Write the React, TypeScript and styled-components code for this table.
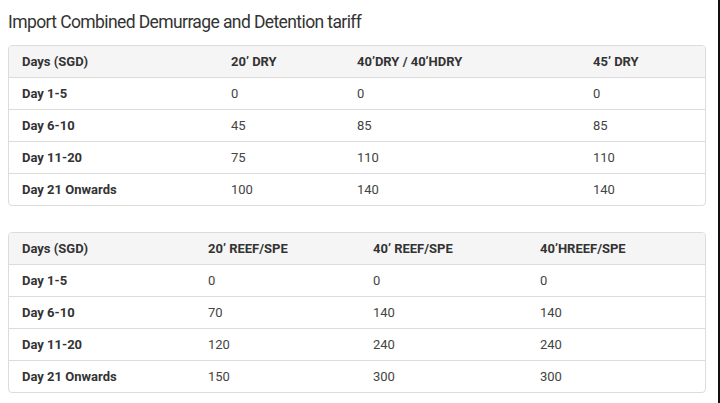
import React from "react";
import styled, { createGlobalStyle } from "styled-components";

const Global = createGlobalStyle`
  html, body { margin: 0; padding: 0; background: #fff; }
  body { font-family: Roboto, "Open Sans", sans-serif; color: #333; }
`;

const Page = styled.div`
  width: 720px;
  height: 403px;
  box-sizing: border-box;
  padding: 11px 12px 0 8px;
  border-right: 2px solid #111;
  overflow: hidden;
`;

const Title = styled.h3`
  margin: 0 0 12px 0;
  font-family: Roboto, sans-serif;
  font-size: 17.5px;
  font-weight: 400;
  line-height: 22px;
  letter-spacing: -0.6px;
  color: #333;
`;

const Panel = styled.div<{ $gap?: number }>`
  border: 1px solid #dcdcdc;
  border-radius: 4px;
  overflow: hidden;
  margin-bottom: ${(p) => p.$gap ?? 0}px;
`;

const Table = styled.table`
  width: 100%;
  border-collapse: separate;
  border-spacing: 0;
  table-layout: fixed;
  font-size: 13px;
`;

const HeadRow = styled.tr`
  background: #f5f5f5;
`;

const Cell = styled.td<{ $bold?: boolean }>`
  height: 32px;
  padding: 0 0 0 13px;
  box-sizing: border-box;
  font-weight: ${(p) => (p.$bold ? 700 : 400)};
  color: ${(p) => (p.$bold ? "#333" : "#444")};
  border-top: 1px solid #dcdcdc;
  vertical-align: middle;
  white-space: nowrap;
  tr:first-child > & {
    border-top: none;
    height: 31px;
  }
`;

type TableData = { widths: number[]; head: string[]; rows: string[][] };

const t1: TableData = {
  widths: [209, 126, 236, 127],
  head: ["Days (SGD)", "20’ DRY", "40’DRY / 40’HDRY", "45’ DRY"],
  rows: [
    ["Day 1-5", "0", "0", "0"],
    ["Day 6-10", "45", "85", "85"],
    ["Day 11-20", "75", "110", "110"],
    ["Day 21 Onwards", "100", "140", "140"],
  ],
};

const t2: TableData = {
  widths: [186, 165, 167, 180],
  head: ["Days (SGD)", "20’ REEF/SPE", "40’ REEF/SPE", "40’HREEF/SPE"],
  rows: [
    ["Day 1-5", "0", "0", "0"],
    ["Day 6-10", "70", "140", "140"],
    ["Day 11-20", "120", "240", "240"],
    ["Day 21 Onwards", "150", "300", "300"],
  ],
};

const Tariff = ({ data, gap }: { data: TableData; gap?: number }) => (
  <Panel $gap={gap}>
    <Table>
      <colgroup>
        {data.widths.map((w, i) => (
          <col key={i} style={{ width: w }} />
        ))}
      </colgroup>
      <tbody>
        <HeadRow>
          {data.head.map((h, i) => (
            <Cell key={i} $bold>
              {h}
            </Cell>
          ))}
        </HeadRow>
        {data.rows.map((r, ri) => (
          <tr key={ri}>
            {r.map((c, ci) => (
              <Cell key={ci} $bold={ci === 0}>
                {c}
              </Cell>
            ))}
          </tr>
        ))}
      </tbody>
    </Table>
  </Panel>
);

export default function App() {
  return (
    <>
      <Global />
      <Page>
        <Title>Import Combined Demurrage and Detention tariff</Title>
        <Tariff data={t1} gap={26} />
        <Tariff data={t2} />
      </Page>
    </>
  );
}
